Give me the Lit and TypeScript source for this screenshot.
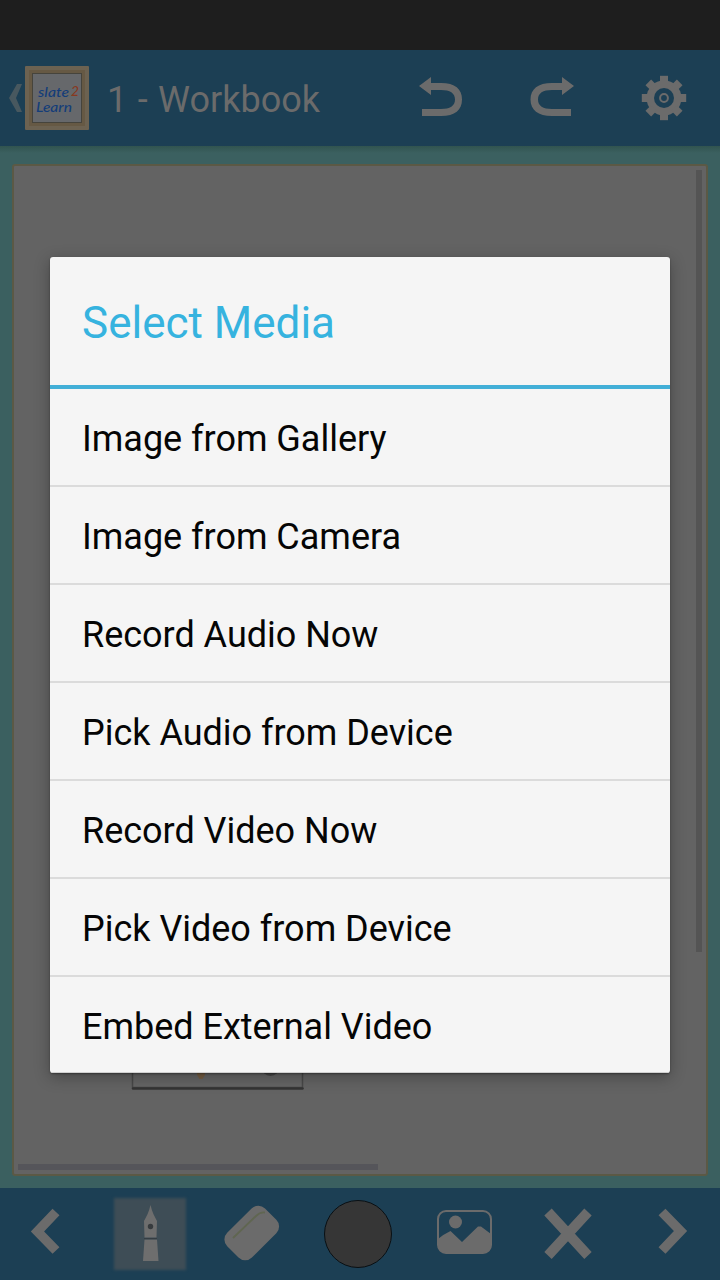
import { LitElement, html, svg, css } from "lit";
import { customElement } from "lit/decorators.js";

const entries = [
  "Image from Gallery",
  "Image from Camera",
  "Record Audio Now",
  "Pick Audio from Device",
  "Record Video Now",
  "Pick Video from Device",
  "Embed External Video",
];

const teeth = [0, 45, 90, 135, 180, 225, 270, 315];

@customElement("workbook-header")
class WorkbookHeader extends LitElement {
  static styles = css`
    :host { display: flex; height: 96px; background: #1c3f54; color: #6b6b6b; }
    svg { display: block; flex: none; }
    .title { flex: 1; font: 36px/100px Roboto, sans-serif; padding-left: 7px; word-spacing: 1.5px; white-space: nowrap; }
    .script { font-family: Lato, sans-serif; font-style: italic; font-weight: 500; }
  `;
  render() {
    return html`
      <svg width="100" height="96" viewBox="0 50 100 96">
        <path d="M17 84h5l-6 14 6 14h-5l-8-14z" fill="#48585f" />
        <rect x="25" y="66" width="64" height="64" rx="1" fill="#6c6251" />
        <rect x="29" y="70" width="56" height="56" fill="#665944" />
        <rect x="32.5" y="73.5" width="49" height="49" fill="#66686b" stroke="#46443c" />
        <g class="script" fill="#143d79">
          <text x="38" y="96.500" font-size="13" textLength="31" lengthAdjust="spacingAndGlyphs">slate</text>
          <text x="36" y="112" font-size="13" textLength="36" lengthAdjust="spacingAndGlyphs">Learn</text>
          <text x="71" y="96" font-size="14" fill="#88391f" textLength="8" lengthAdjust="spacingAndGlyphs">2</text>
        </g>
      </svg>
      <div class="title">1 - Workbook</div>
      <svg width="110" height="96" viewBox="386 50 110 96" fill="#6b6b6b">
        <path d="M419 86l12-9v6h10c14 0 21 6 21 16.500s-7 16.500-21 16.500h-19v-7h19c9 0 14-3 14-9.500s-5-9.500-14-9.500h-10v5z" />
      </svg>
      <svg width="112" height="96" viewBox="496 50 112 96" fill="#6b6b6b">
        <path d="M574 86l-12-9v6h-10c-14 0-21.500 6-21.500 16.500s7.500 16.500 21.500 16.500h19v-7h-19c-9 0-14-3-14-9.500s5-9.500 14-9.500h10v5z" />
      </svg>
      <svg width="112" height="96" viewBox="608 50 112 96" fill="#6b6b6b">
        <circle cx="664" cy="98" r="17.500" />
        ${teeth.map((a) => svg`<rect x="660" y="75.800" width="8" height="8" transform="rotate(${a} 664 98)" />`)}
        <circle cx="664" cy="98" r="10" fill="#1c3f54" />
        <circle cx="664" cy="98" r="3.900" fill="none" stroke="#6b6b6b" stroke-width="2" />
      </svg>
    `;
  }
}

@customElement("drawing-toolbar")
class DrawingToolbar extends LitElement {
  static styles = css`
    :host { display: flex; height: 92px; background: #1c3f54; }
    svg { display: block; flex: none; }
    .glow { filter: blur(1.5px); }
  `;
  render() {
    return html`
      <svg width="100" height="92" viewBox="0 1188 100 92">
        <path d="M56 1212l-18.500 19.500 18.500 19" fill="none" stroke="#6b6b6b" stroke-width="9.600" />
      </svg>
      <svg width="100" height="92" viewBox="100 1188 100 92">
        <rect class="glow" x="114" y="1198" width="72" height="72" fill="#3e4d56" />
        <path d="M150.500 1205c1.500 7 4 11.500 6.500 16l-.5 16.500h-12l-.5-16.500c2.500-4.500 5-9 6.500-16zM144.500 1239.500h12.500l1.500 21.500h-15.500z" fill="#6e6e6e" />
        <path d="M144 1238.700h13" stroke="#343b3f" />
        <circle cx="150.500" cy="1226.500" r="2.700" fill="#373b3e" />
      </svg>
      <svg width="104" height="92" viewBox="200 1188 104 92">
        <rect x="225" y="1215.500" width="53.500" height="35" rx="9.500" transform="rotate(-45 251.750 1233)" fill="#6b6b6b" />
        <path d="M233 1238l23-22q4-4 9-3.500" fill="none" stroke="#606651" stroke-width="1.800" />
      </svg>
      <svg width="108" height="92" viewBox="304 1188 108 92">
        <circle cx="358" cy="1234" r="33.500" fill="#363636" stroke="#090f13" />
      </svg>
      <svg width="104" height="92" viewBox="412 1188 104 92">
        <rect x="438" y="1211" width="53" height="42" rx="8" fill="none" stroke="#6b6b6b" stroke-width="2" />
        <circle cx="455.500" cy="1222" r="6.500" fill="#6b6b6b" />
        <path d="M438 1239q6-5 12.500-8l11.500 11 16-15.500h3l10 7.500v11q0 8-8 8h-37q-8 0-8-8z" fill="#6b6b6b" />
      </svg>
      <svg width="104" height="92" viewBox="516 1188 104 92">
        <path d="M548 1212l40 43.500M588 1212l-40 43.500" stroke="#6b6b6b" stroke-width="10" />
      </svg>
      <svg width="100" height="92" viewBox="620 1188 100 92">
        <path d="M662 1212l18.500 19-18.500 19.500" fill="none" stroke="#6b6b6b" stroke-width="9.600" />
      </svg>
    `;
  }
}

@customElement("media-dialog")
class MediaDialog extends LitElement {
  static styles = css`
    :host {
      display: block; box-sizing: border-box; width: 620px; height: 816px; overflow: hidden;
      background: #f5f5f5; border-radius: 3px; font-family: Roboto, sans-serif;
      box-shadow: 0 4px 16px rgba(0, 0, 0, 0.3), 0 1px 2px rgba(0, 0, 0, 0.35);
    }
    .heading {
      box-sizing: border-box; height: 132px; padding-left: 32px; border-bottom: 4px solid #42afd7;
      color: #36b3df; font-size: 44px; line-height: 132px;
    }
    .entry {
      box-sizing: border-box; height: 98px; padding-left: 32px; border-bottom: 2px solid #dbdbdb;
      color: #050505; font-size: 36px; line-height: 100px; letter-spacing: -0.02px; white-space: nowrap;
    }
    .entry:last-child { height: 97px; border-bottom-color: #d0d0d0; }
  `;
  render() {
    return html`
      <div class="heading">Select Media</div>
      ${entries.map((label) => html`<div class="entry">${label}</div>`)}
    `;
  }
}

@customElement("app-root")
class AppRoot extends LitElement {
  static styles = css`
    :host { display: flex; flex-direction: column; position: relative; width: 720px; height: 1280px; overflow: hidden; }
    .status { height: 50px; background: #1e1e1e; }
    .desk {
      flex: 1; box-sizing: border-box; padding: 18px 12px 12px;
      background: linear-gradient(#31544f, #3b6060 7px);
    }
    .sheet {
      box-sizing: border-box; height: 100%; display: grid; grid-template: 1fr 6px / 1fr 6px;
      padding: 4px; border: 2px solid #5b5945; border-radius: 3px; background: #636363;
    }
    .vertical { grid-area: 1 / 2; height: 782px; background: #545454; }
    .horizontal { grid-area: 2 / 1; width: 360px; background: #55555a; }
    .card { grid-area: 1 / 1; align-self: end; margin: 0 0 73px 113px; width: 174px; height: 42px; }
    .card svg { display: block; }
    media-dialog { position: absolute; left: 50px; top: 257px; }
  `;
  render() {
    return html`
      <div class="status"></div>
      <workbook-header></workbook-header>
      <div class="desk">
        <div class="sheet">
          <div class="card">
            <svg width="174" height="42" viewBox="131 1049 174 42">
              <path d="M132.500 1049v38.500h170v-38.500" fill="#656565" stroke="#484848" stroke-width="1.500" />
              <path d="M133 1088.500h169.500" stroke="#343434" stroke-width="2.500" stroke-linecap="round" />
              <path d="M197 1066h8v9l-2.500 4h-3l-2.500-4z" fill="#745d43" />
              <circle cx="270.500" cy="1067" r="9" fill="#474747" />
            </svg>
          </div>
          <div class="vertical"></div>
          <div class="horizontal"></div>
        </div>
      </div>
      <drawing-toolbar></drawing-toolbar>
      <media-dialog></media-dialog>
    `;
  }
}
